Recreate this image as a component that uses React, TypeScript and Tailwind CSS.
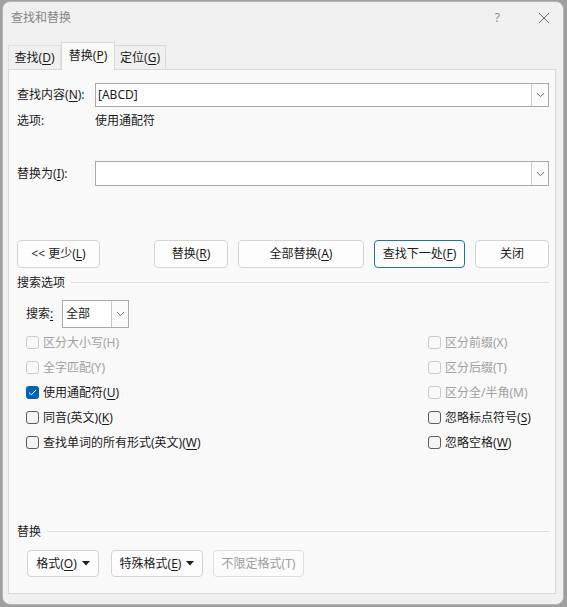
import React from 'react';

const FONT = { fontFamily: '"Noto Sans", "Noto Sans CJK SC", sans-serif' };

function Key({ k }: { k: string }) {
  return (
    <>
      (<u className="underline-offset-2">{k}</u>)
    </>
  );
}

function Chevron() {
  return (
    <svg width="9" height="6" viewBox="0 0 9 6" fill="none">
      <path d="M1 1.2 L4.5 4.6 L8 1.2" stroke="#555" strokeWidth="0.9" />
    </svg>
  );
}

function Caret() {
  return (
    <svg className="ml-[5px]" width="8" height="5" viewBox="0 0 8 5">
      <path d="M0 0 L8 0 L4 4.5 Z" fill="#1a1a1a" />
    </svg>
  );
}

function ComboInput({ value, height }: { value?: string; height: string }) {
  return (
    <div className={`flex flex-1 ${height} border border-[#a9a9a9] bg-white`}>
      <div className="flex flex-1 items-center pl-[2px] text-[12px] text-[#1a1a1a]">{value}</div>
      <div className="flex w-[17px] items-center justify-center border-l border-[#c8c8c8] bg-[#fbfbfb]">
        <Chevron />
      </div>
    </div>
  );
}

function Btn({
  children,
  w,
  focused,
  disabled,
}: {
  children: React.ReactNode;
  w: string;
  focused?: boolean;
  disabled?: boolean;
}) {
  return (
    <div
      className={`flex ${w} h-full items-center justify-center rounded-[4px] border text-[12px] ${
        focused
          ? 'border-[#1f6fb2] bg-[#fdfdfd] text-[#1a1a1a]'
          : disabled
            ? 'border-[#dedede] bg-[#fbfbfb] text-[#9e9e9e]'
            : 'border-[#d3d3d3] bg-[#fdfdfd] text-[#1a1a1a]'
      }`}
    >
      {children}
    </div>
  );
}

function Check({
  label,
  state,
}: {
  label: React.ReactNode;
  state: 'disabled' | 'off' | 'on';
}) {
  return (
    <div className="flex h-[25px] items-center">
      {state === 'on' ? (
        <div className="flex h-[13px] w-[13px] items-center justify-center rounded-[3px] bg-[#0061b8]">
          <svg width="9" height="7" viewBox="0 0 9 7" fill="none">
            <path d="M1 3.6 L3.3 5.8 L8 1" stroke="white" strokeWidth="1" />
          </svg>
        </div>
      ) : (
        <div
          className={`h-[13px] w-[13px] rounded-[3px] border ${
            state === 'disabled' ? 'border-[#c9c9c9] bg-[#f9f9f9]' : 'border-[#5c5c5c] bg-[#f4f4f4]'
          }`}
        />
      )}
      <span
        className={`ml-[4px] text-[12px] leading-[18px] ${
          state === 'disabled' ? 'text-[#a0a0a0]' : 'text-[#1a1a1a]'
        }`}
      >
        {label}
      </span>
    </div>
  );
}

function GroupLabel({ text }: { text: string }) {
  return (
    <div className="flex h-[18px] items-center">
      <span className="text-[12px] leading-[18px] text-[#1a1a1a]">{text}</span>
      <div className="mb-[2px] ml-[6px] flex-1 border-t border-[#dcdcdc]" />
    </div>
  );
}

export default function App() {
  return (
    <div className="h-[607px] w-[567px] bg-[#9f9f9f] pl-[2px] pt-[1px]" style={FONT}>
      <div className="flex h-[604px] w-[562px] flex-col rounded-[8px] border border-[#b5b5b5] bg-[#f0f0f0]">
        {/* title bar */}
        <div className="flex h-[39px] items-start pt-[7px]">
          <span className="ml-[8px] text-[12px] leading-[18px] text-[#858585]">查找和替换</span>
          <span className="ml-auto mr-[38px] text-[12px] leading-[18px] text-[#8a8a8a]">?</span>
          <svg className="mr-[13px] mt-[3px]" width="12" height="12" viewBox="0 0 12 12" fill="none">
            <path d="M1 1 L11 11 M11 1 L1 11" stroke="#6f6f6f" strokeWidth="1" />
          </svg>
        </div>

        {/* tabs */}
        <div className="ml-[5px] flex h-[28px] items-end">
          <div className="flex h-[24px] w-[53px] items-center justify-center border border-b-0 border-[#e0e0e0] bg-[#f0f0f0] text-[12px] text-[#1a1a1a]">
            查找<Key k="D" />
          </div>
          <div className="relative z-10 -mb-px flex h-[28px] w-[54px] items-start justify-center border border-b-0 border-[#d8d8d8] bg-[#f9f9f9] pt-[4px] text-[12px] text-[#1a1a1a]">
            替换<Key k="P" />
          </div>
          <div className="flex h-[24px] w-[51px] items-center justify-center border border-b-0 border-l-0 border-[#d8d8d8] bg-[#f0f0f0] text-[12px] text-[#1a1a1a]">
            定位<Key k="G" />
          </div>
        </div>

        {/* panel */}
        <div className="ml-[5px] flex h-[525px] w-[548px] flex-col border border-[#d8d8d8] bg-[#f9f9f9] pl-[8px] pr-[6px] pt-[13px]">
          <div className="flex h-[24px] items-center">
            <span className="w-[78px] text-[12px] text-[#1a1a1a]">
              查找内容<Key k="N" />:
            </span>
            <ComboInput value="[ABCD]" height="h-[24px]" />
          </div>
          <div className="mt-[5px] flex h-[18px] items-center text-[12px] text-[#1a1a1a]">
            <span className="w-[78px]">选项:</span>
            <span>使用通配符</span>
          </div>
          <div className="mt-[31px] flex h-[25px] items-center">
            <span className="w-[78px] text-[12px] text-[#1a1a1a]">
              替换为<Key k="I" />:
            </span>
            <ComboInput height="h-[25px]" />
          </div>

          <div className="mt-[54px] flex h-[28px]">
            <Btn w="w-[83px]">
              &lt;&lt; 更少<Key k="L" />
            </Btn>
            <div className="ml-[54px]">
              <Btn w="w-[74px]">
                替换<Key k="R" />
              </Btn>
            </div>
            <div className="ml-[10px]">
              <Btn w="w-[126px]">
                全部替换<Key k="A" />
              </Btn>
            </div>
            <div className="ml-[10px]">
              <Btn w="w-[91px]" focused>
                查找下一处<Key k="F" />
              </Btn>
            </div>
            <div className="ml-[10px]">
              <Btn w="w-[74px]">关闭</Btn>
            </div>
          </div>

          <div className="mt-[6px]">
            <GroupLabel text="搜索选项" />
          </div>

          <div className="ml-[9px] mt-[8px] flex h-[28px] items-center">
            <span className="w-[36px] text-[12px] text-[#1a1a1a]">
              搜索<u className="underline-offset-2">:</u>
            </span>
            <div className="flex h-[28px] w-[67px] border border-[#a9a9a9] bg-white">
              <div className="flex flex-1 items-center pl-[3px] text-[12px] text-[#1a1a1a]">全部</div>
              <div className="flex w-[17px] items-center justify-center border-l border-[#c8c8c8] bg-[#fbfbfb]">
                <Chevron />
              </div>
            </div>
          </div>

          <div className="ml-[9px] mt-[2px] flex">
            <div className="flex flex-1 flex-col">
              <Check state="disabled" label="区分大小写(H)" />
              <Check state="disabled" label="全字匹配(Y)" />
              <Check state="on" label={<>使用通配符<Key k="U" /></>} />
              <Check state="off" label={<>同音(英文)<Key k="K" /></>} />
              <Check state="off" label={<>查找单词的所有形式(英文)<Key k="W" /></>} />
            </div>
            <div className="flex w-[121px] flex-col">
              <Check state="disabled" label="区分前缀(X)" />
              <Check state="disabled" label="区分后缀(T)" />
              <Check state="disabled" label="区分全/半角(M)" />
              <Check state="off" label={<>忽略标点符号<Key k="S" /></>} />
              <Check state="off" label={<>忽略空格<Key k="W" /></>} />
            </div>
          </div>

          <div className="mt-[68px]">
            <GroupLabel text="替换" />
          </div>

          <div className="ml-[10px] mt-[9px] flex h-[27px]">
            <Btn w="w-[72px]">
              格式<Key k="O" />
              <Caret />
            </Btn>
            <div className="ml-[12px]">
              <Btn w="w-[92px]">
                特殊格式<Key k="E" />
                <Caret />
              </Btn>
            </div>
            <div className="ml-[10px]">
              <Btn w="w-[91px]" disabled>
                不限定格式(T)
              </Btn>
            </div>
          </div>
        </div>
      </div>
    </div>
  );
}
